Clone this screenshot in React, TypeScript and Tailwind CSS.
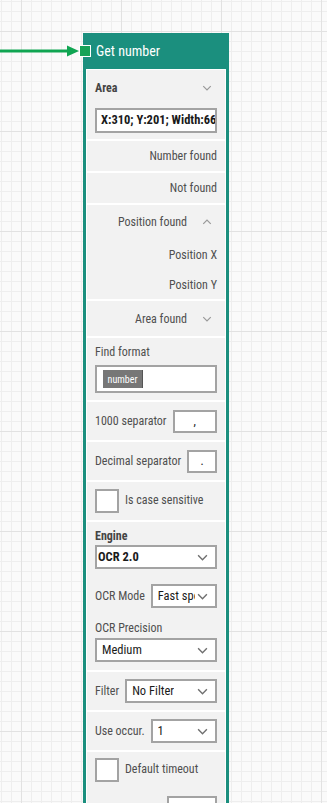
import React from "react";

const font = "font-['Roboto_Condensed',Roboto,sans-serif] font-stretch-condensed";

function Chevron({ up, className }: { up?: boolean; className?: string }) {
  return (
    <svg viewBox="0 0 12 8" className={className} fill="none" stroke="currentColor" strokeWidth={1.6}>
      <path d={up ? "M1 6.5l5-5 5 5" : "M1 1.5l5 5 5-5"} />
    </svg>
  );
}

function Select({ value, bold, className }: { value: string; bold?: boolean; className?: string }) {
  return (
    <div
      className={`relative flex h-[24px] items-center border-2 border-[#a3a3a3] bg-white pr-[20px] text-[12.5px] text-[#1a1a1a] ${bold ? "font-bold" : ""} ${className ?? ""}`}
    >
      <span className="min-w-0 overflow-hidden whitespace-nowrap">{value}</span>
      <Chevron className="absolute right-[7px] top-[7px] h-[7px] w-[11px] text-[#6f6f6f]" />
    </div>
  );
}

function Checkbox() {
  return <div className="h-[24px] w-[24px] shrink-0 border-2 border-[#a3a3a3] bg-white" />;
}

export default function App() {
  return (
    <div
      className={`relative h-[803px] w-full overflow-hidden bg-[#fafafa] bg-[linear-gradient(#e2e2e2_1px,transparent_1px),linear-gradient(90deg,#e2e2e2_1px,transparent_1px),linear-gradient(#eeeeee_1px,transparent_1px),linear-gradient(90deg,#eeeeee_1px,transparent_1px)] bg-size-[100px_100px,100px_100px,10px_10px,10px_10px] bg-position-[0_31px,21px_0,0_1px,1px_0] ${font}`}
    >
      {/* incoming link */}
      <svg className="absolute left-0 top-[44px] h-[14px] w-[80px]" viewBox="0 0 80 14">
        <line x1="0" y1="7" x2="70" y2="7" stroke="#10a552" strokeWidth="3" />
        <polygon points="67,1.5 79,7 67,12.5" fill="#10a552" />
      </svg>

      <div className="absolute left-[83px] top-[33px] w-[146px] border-x-[3px] border-[#1b8f7e] bg-white">
        <div className="relative -mx-[3px] flex h-[36px] items-center bg-[#1b8f7e] pl-[13px] font-[Roboto,sans-serif] text-[14px] text-white">
          <div className="absolute -left-[4px] top-[12px] h-[12px] w-[12px] border border-white bg-[#16a257]" />
          Get number
        </div>

        <div className="flex flex-col gap-[2px] px-px pt-px text-[12px] text-[#4f4f4f]">
          <div className="bg-[#f2f2f2] px-2 pb-[6px] pt-[10px]">
            <div className="flex h-[16px] items-center justify-between pr-[5px]">
              <span className="font-bold text-[#444]">Area</span>
              <Chevron className="h-[6px] w-[10px] text-[#999]" />
            </div>
            <div className="mt-[12px] flex h-[25px] items-center overflow-hidden border-2 border-[#a3a3a3] bg-white pl-[4px] text-[12.5px] font-bold text-[#1a1a1a]">
              <span className="whitespace-nowrap">X:310; Y:201; Width:66; Height:24</span>
            </div>
          </div>

          <div className="flex h-[30px] items-center justify-end bg-[#f2f2f2] px-2">Number found</div>
          <div className="flex h-[30px] items-center justify-end bg-[#f2f2f2] px-2">Not found</div>

          <div className="bg-[#f2f2f2]">
            <div className="flex h-[34px] items-center justify-end gap-[15px] pr-[13px]">
              Position found
              <Chevron up className="h-[6px] w-[10px] text-[#999]" />
            </div>
            <div className="flex h-[31px] items-center justify-end px-2">Position X</div>
            <div className="flex h-[29px] items-center justify-end px-2">Position Y</div>
          </div>

          <div className="flex h-[35px] items-center justify-end gap-[15px] bg-[#f2f2f2] pr-[13px]">
            Area found
            <Chevron className="h-[6px] w-[10px] text-[#999]" />
          </div>

          <div className="bg-[#f2f2f2] px-2 pb-[7px] pt-[6px]">
            <div className="flex h-[16px] items-center">Find format</div>
            <div className="mt-[5px] flex h-[28px] items-center border-2 border-[#a3a3a3] bg-white pl-[6px]">
              <span className="flex h-[18px] w-[40px] items-center justify-center border-r border-[#555] bg-[#777] text-[10px] text-white">
                number
              </span>
            </div>
          </div>

          <div className="flex h-[38px] items-center gap-[6px] bg-[#f2f2f2] px-2">
            <span className="whitespace-nowrap">1000 separator</span>
            <div className="flex h-[23px] min-w-0 flex-1 items-center justify-center border-2 border-[#a3a3a3] bg-white text-[#222]">,</div>
          </div>

          <div className="flex h-[38px] items-center gap-[6px] bg-[#f2f2f2] px-2">
            <span className="whitespace-nowrap">Decimal separator</span>
            <div className="flex h-[23px] min-w-0 flex-1 items-center justify-center border-2 border-[#a3a3a3] bg-white text-[#222]">.</div>
          </div>

          <div className="flex h-[38px] items-center gap-[6px] bg-[#f2f2f2] px-2">
            <Checkbox />
            <span className="-mt-[2px] whitespace-nowrap">Is case sensitive</span>
          </div>

          <div className="bg-[#f2f2f2] px-2 pb-[8px] pt-[6px]">
            <div className="flex h-[16px] items-center font-bold text-[#444]">Engine</div>
            <Select value="OCR 2.0" bold className="mt-[1px] pl-[1px]" />
            <div className="mt-[15px] flex items-center gap-[6px]">
              <span className="whitespace-nowrap">OCR Mode</span>
              <Select value="Fast speed" className="min-w-0 flex-1 pl-[5px]" />
            </div>
            <div className="mt-[12px] flex h-[16px] items-center">OCR Precision</div>
            <Select value="Medium" className="mt-[2px] pl-[5px]" />
          </div>

          <div className="flex h-[38px] items-center gap-[6px] bg-[#f2f2f2] px-2">
            <span className="whitespace-nowrap">Filter</span>
            <Select value="No Filter" className="min-w-0 flex-1 pl-[5px]" />
          </div>

          <div className="flex h-[38px] items-center gap-[6px] bg-[#f2f2f2] px-2">
            <span className="whitespace-nowrap">Use occur.</span>
            <Select value="1" className="min-w-0 flex-1 pl-[5px]" />
          </div>

          <div className="bg-[#f2f2f2] px-2 pt-[6px]">
            <div className="flex items-center gap-[6px]">
              <Checkbox />
              <span className="-mt-[3px] whitespace-nowrap">Default timeout</span>
            </div>
            <div className="mt-[14px] flex items-center gap-[6px]">
              <span className="w-[66px] shrink-0 overflow-hidden whitespace-nowrap pl-[8px]">Timeout</span>
              <div className="h-[23px] min-w-0 flex-1 border-2 border-[#a3a3a3] bg-white" />
            </div>
            <div className="h-[20px]" />
          </div>
        </div>
      </div>
    </div>
  );
}
